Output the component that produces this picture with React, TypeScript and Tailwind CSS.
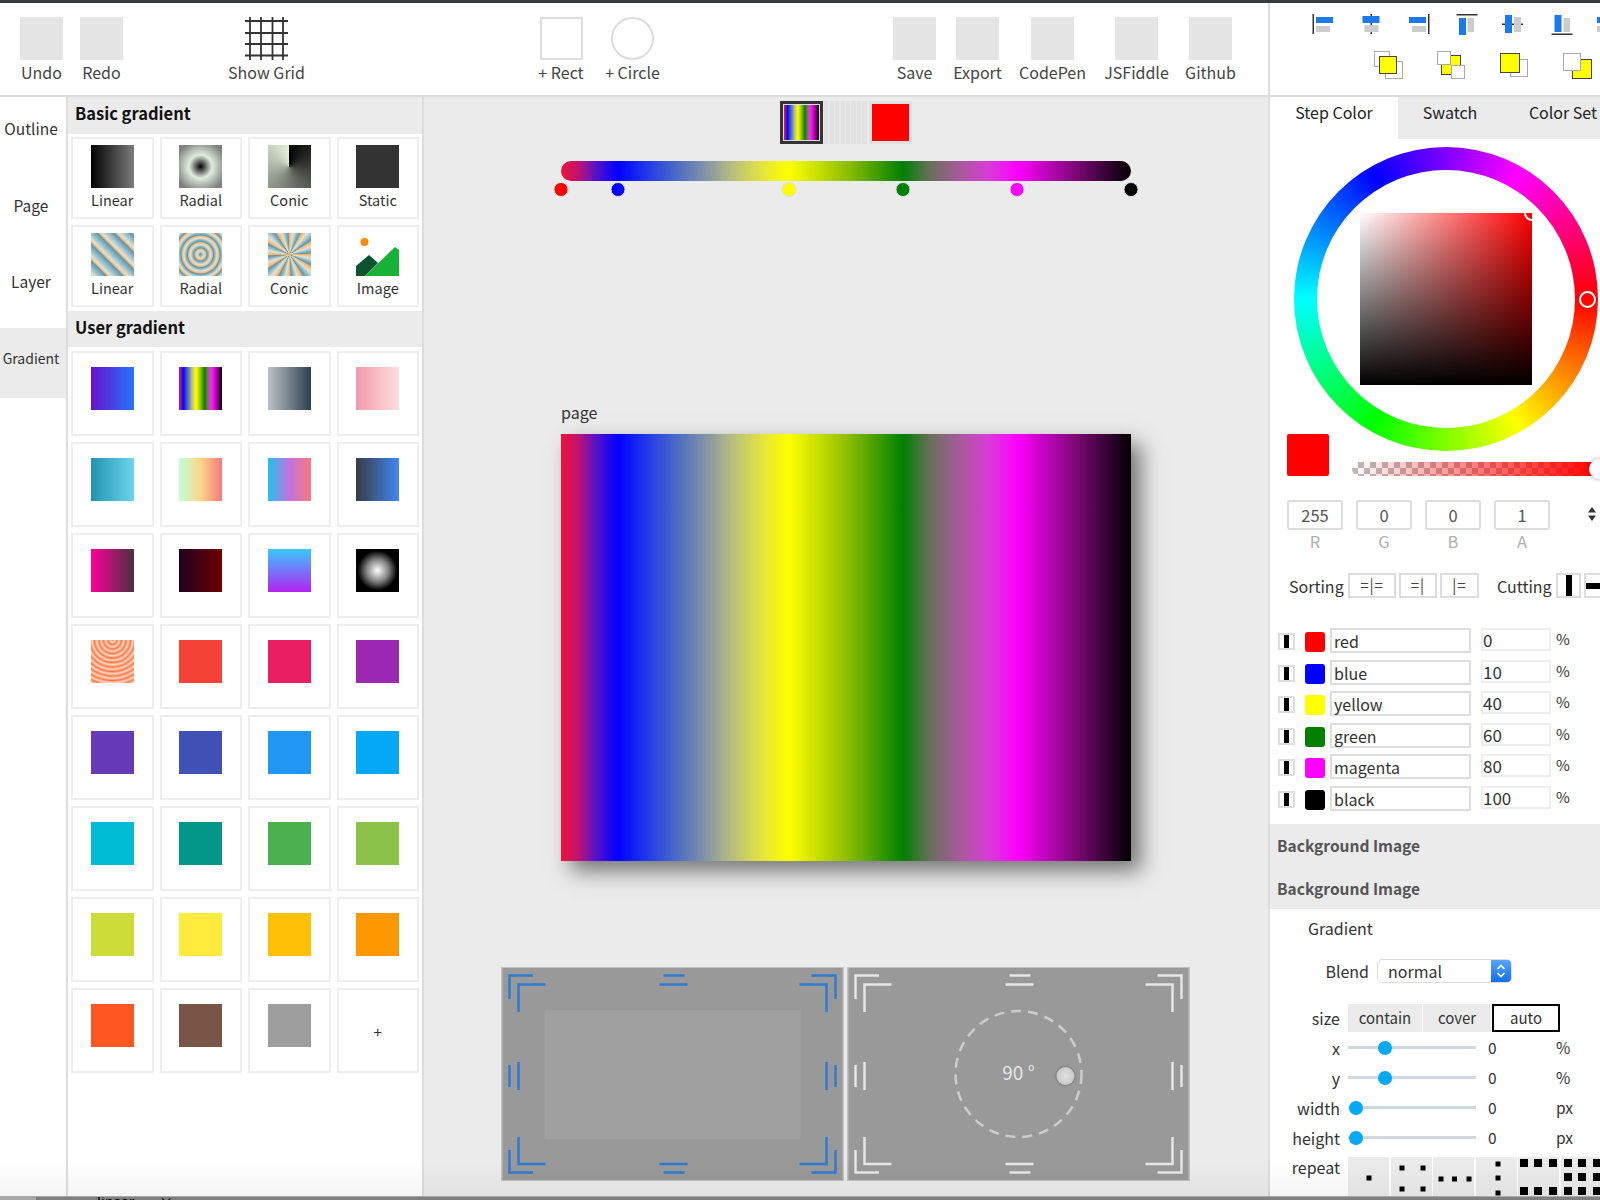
import React from "react";

const MULTI =
  "bg-[linear-gradient(to_right,#ee1236_0%,#c01270_3%,#5a12c8_6%,#0000ff_10%,#2038e8_15%,#4a68c8_20%,#8090a8_25%,#b8bd80_30%,#e2e240_35%,#ffff00_40%,#90c000_50%,#008000_60%,#6e6e60_65%,#a85a9a_70%,#d83cd8_75%,#ff00ff_80%,#80087a_90%,#000000_100%)]";

const Tool = ({ label, cls, children }: { label: string; cls: string; children?: React.ReactNode }) => (
  <div className={`flex flex-col items-center shrink-0 ${cls}`}>
    {children ?? <div className="w-[43px] h-[43px] bg-[#e5e5e5]" />}
    <div className="mt-[1px] text-[16px] leading-[22px] text-[#444] whitespace-nowrap">{label}</div>
  </div>
);

const GridIcon = () => (
  <svg width="43" height="43" viewBox="0 0 43 43" stroke="#333" strokeWidth="1.8">
    {[5, 16, 27.5, 38].map((v) => (
      <line key={"v" + v} x1={v} x2={v} y1="0" y2="43" />
    ))}
    {[4, 16, 27, 38.5].map((v) => (
      <line key={"h" + v} y1={v} y2={v} x1="0" x2="43" />
    ))}
  </svg>
);

const basic: { label: string; cls: string }[] = [
  { label: "Linear", cls: "bg-[linear-gradient(to_right,#000,#7c7c7c)]" },
  { label: "Radial", cls: "bg-[radial-gradient(circle,#000_0%,#dfeedd_38%,#808080_85%)]" },
  { label: "Conic", cls: "bg-[conic-gradient(#000,#e4f2dc)]" },
  { label: "Static", cls: "bg-[#333]" },
  { label: "Linear", cls: "bg-[repeating-linear-gradient(45deg,#f9b56b_0,#dfe3d7_2px,#5897b3_11px,#f9b56b_12px)]" },
  { label: "Radial", cls: "bg-[repeating-radial-gradient(circle,#5897b3_0,#dfe3d7_3.5px,#f9b56b_5.5px,#5897b3_6.5px)]" },
  { label: "Conic", cls: "bg-[repeating-conic-gradient(#f9b56b_0deg,#dfe3d7_10deg,#5897b3_26deg,#f9b56b_30deg)]" },
];

const user: string[] = [
  "bg-[linear-gradient(to_right,#6a11cb,#2575fc)]",
  MULTI,
  "bg-[linear-gradient(to_right,#bdc3c7,#2c3e50)]",
  "bg-[linear-gradient(to_right,#ee9ca7,#ffdde1)]",
  "bg-[linear-gradient(to_right,#2193b0,#6dd5ed)]",
  "bg-[linear-gradient(to_right,#c1ffd7,#fbd786,#f7797d)]",
  "bg-[linear-gradient(to_right,#22c1f0,#c471de,#f7797d)]",
  "bg-[linear-gradient(to_right,#373b44,#4286f4)]",
  "bg-[linear-gradient(to_right,#ff0099,#493240)]",
  "bg-[linear-gradient(to_right,#200122,#6f0000)]",
  "bg-[linear-gradient(to_bottom,#3bc8ff,#b224ef)]",
  "bg-[radial-gradient(circle,#fff_0%,#888_35%,#000_65%)]",
  "bg-[repeating-radial-gradient(circle_at_50%_0%,#ff7a45_0,#ffd8c6_2.2px,#ff7a45_4.5px)]",
  "bg-[#f44336]",
  "bg-[#e91e63]",
  "bg-[#9c27b0]",
  "bg-[#673ab7]",
  "bg-[#3f51b5]",
  "bg-[#2196f3]",
  "bg-[#03a9f4]",
  "bg-[#00bcd4]",
  "bg-[#009688]",
  "bg-[#4caf50]",
  "bg-[#8bc34a]",
  "bg-[#cddc39]",
  "bg-[#ffeb3b]",
  "bg-[#ffc107]",
  "bg-[#ff9800]",
  "bg-[#ff5722]",
  "bg-[#795548]",
  "bg-[#9e9e9e]",
];

const ImageIcon = () => (
  <svg width="43" height="43" viewBox="0 0 43 43">
    <circle cx="8.5" cy="9" r="4" fill="#ff8c00" />
    <path d="M0 33 L13 22 L22 30 L9 43 L0 43 Z" fill="#0d5231" />
    <path d="M9 43 L39 14 L43 17 L43 43 Z" fill="#17b136" />
  </svg>
);

const BasicCell = ({ label, children }: { label: string; children: React.ReactNode }) => (
  <div className="h-[82px] border-2 border-[#eeeeee] flex flex-col items-center pt-[6px]">
    {children}
    <div className="mt-[1px] text-[14.5px] leading-[22px] text-[#333]">{label}</div>
  </div>
);

const Align = ({ children }: { children: React.ReactNode }) => (
  <svg width="24" height="24" viewBox="0 0 24 24" className="shrink-0">
    {children}
  </svg>
);

const B = "#1b7ae8";
const G = "#cccccc";
const D = "#333333";

const Sq = ({ x, y, s, c, b }: { x: number; y: number; s: number; c: string; b: string }) => (
  <rect x={x + 0.5} y={y + 0.5} width={s - 1} height={s - 1} fill={c} stroke={b} strokeWidth="1" />
);

const Order = ({ children }: { children: React.ReactNode }) => (
  <svg width="30" height="30" viewBox="0 0 30 30" className="shrink-0">
    {children}
  </svg>
);

const HeaderPanel = () => (
  <div className="h-[92px] shrink-0 flex flex-col">
    <div className="flex pl-[42px] pt-[10px] gap-[23.5px]">
      <Align>
        <rect x="0.5" y="1" width="1.5" height="20" fill={D} />
        <rect x="4" y="4" width="17" height="6" fill={B} />
        <rect x="4" y="13" width="14" height="6" fill={G} />
      </Align>
      <Align>
        <rect x="10.5" y="1" width="1.5" height="20" fill={D} />
        <rect x="2.5" y="3" width="17" height="7" fill={B} />
        <rect x="4.5" y="12" width="14" height="7" fill={G} />
      </Align>
      <Align>
        <rect x="21" y="1" width="1.5" height="20" fill={D} />
        <rect x="2" y="4" width="17" height="6" fill={B} />
        <rect x="5" y="13" width="14" height="6" fill={G} />
      </Align>
      <Align>
        <rect x="1.5" y="1" width="21" height="1.5" fill={D} />
        <rect x="4" y="5" width="7" height="17" fill={B} />
        <rect x="12.5" y="5" width="6.5" height="14" fill={G} />
      </Align>
      <Align>
        <rect x="0" y="10.5" width="21" height="1.5" fill={D} />
        <rect x="3" y="2" width="7" height="18" fill={B} />
        <rect x="12" y="4" width="7" height="15" fill={G} />
      </Align>
      <Align>
        <rect x="1.5" y="20.5" width="21" height="1.5" fill={D} />
        <rect x="4.5" y="2" width="7" height="17" fill={B} />
        <rect x="13.5" y="5" width="6.5" height="14" fill={G} />
      </Align>
      <Align>
        <rect x="0" y="4" width="17" height="6" fill={B} />
        <rect x="0" y="13" width="14" height="6" fill={G} />
      </Align>
    </div>
    <div className="flex pl-[104px] pt-[14px] gap-[33px]">
      <Order>
        <Sq x={0} y={0} s={16} c="#fff" b="#aaa" />
        <Sq x={11} y={10} s={18} c="#fff" b="#aaa" />
        <Sq x={5} y={5} s={18} c="#ffff00" b="#444" />
      </Order>
      <Order>
        <Sq x={4} y={4} s={20} c="#ffff00" b="#444" />
        <Sq x={0} y={0} s={14} c="#fff" b="#aaa" />
        <Sq x={14} y={14} s={14} c="#fff" b="#aaa" />
      </Order>
      <Order>
        <Sq x={10} y={8} s={18} c="#fff" b="#aaa" />
        <Sq x={0} y={2} s={20} c="#ffff00" b="#444" />
      </Order>
      <Order>
        <Sq x={9} y={8} s={20} c="#ffff00" b="#444" />
        <Sq x={0} y={2} s={18} c="#fff" b="#aaa" />
      </Order>
    </div>
  </div>
);

const stops = [
  { cls: "left-[0%] bg-[#ff0000]" },
  { cls: "left-[10%] bg-[#0000ff]" },
  { cls: "left-[40%] bg-[#ffff00]" },
  { cls: "left-[60%] bg-[#008000]" },
  { cls: "left-[80%] bg-[#ff00ff]" },
  { cls: "left-[100%] bg-[#000000]" },
];

const Handles = ({ color }: { color: string }) => (
  <svg width="342" height="214" viewBox="0 0 342 214" fill="none" stroke={color} strokeWidth="2.5" className="absolute -left-[1px] -top-[1px]">
    <path d="M8 32 V8.5 H31.5 M17 45 V17.5 H44" />
    <path d="M334 32 V8.5 H310 M325 45 V17.5 H298" />
    <path d="M8 183 V205.5 H31.5 M17 170 V197 H44" />
    <path d="M334 183 V205.5 H310 M325 170 V197 H298" />
    <path d="M162 8.5 H183 M158 17.5 H186 M162 205.5 H183 M158 197 H186" />
    <path d="M8 98 V120 M17 95 V123 M334 98 V120 M325 95 V123" />
  </svg>
);

const rows = [
  { name: "red", v: "0", cls: "bg-[#ff0000]" },
  { name: "blue", v: "10", cls: "bg-[#0000ff]" },
  { name: "yellow", v: "40", cls: "bg-[#ffff00]" },
  { name: "green", v: "60", cls: "bg-[#008000]" },
  { name: "magenta", v: "80", cls: "bg-[#ff00ff]" },
  { name: "black", v: "100", cls: "bg-[#000000]" },
];

const sliders = [
  { label: "x", cls: "left-[37px]", unit: "%" },
  { label: "y", cls: "left-[37px]", unit: "%" },
  { label: "width", cls: "left-[8px]", unit: "px" },
  { label: "height", cls: "left-[8px]", unit: "px" },
];

const Dots = ({ pts, s = 5 }: { pts: [number, number][]; s?: number }) => (
  <svg width="41" height="42" viewBox="0 0 41 42" className="shrink-0 bg-[#ebebeb]">
    {pts.map(([x, y], i) => (
      <rect key={i} x={x - s / 2} y={y - s / 2} width={s} height={s} fill="#000" />
    ))}
  </svg>
);

export default function App() {
  return (
    <div className="relative w-[1600px] h-[1200px] overflow-hidden bg-white font-['Noto_Sans_CJK_KR','Noto_Sans',sans-serif] flex flex-col">
      <div className="h-[3px] shrink-0 bg-[#373b3f]" />
      <div className="flex h-[1193px] shrink-0">
        {/* Left + centre */}
        <div className="w-[1268px] shrink-0 flex flex-col">
          <div className="h-[92px] shrink-0 flex pt-[14px]">
            <Tool label="Undo" cls="ml-[12px] w-[59px]" />
            <Tool label="Redo" cls="w-[61px]" />
            <Tool label="Show Grid" cls="ml-[89.5px] w-[90px]">
              <GridIcon />
            </Tool>
            <Tool label="+ Rect" cls="ml-[219.5px] w-[60px]">
              <div className="w-[43px] h-[43px] border-2 border-[#dddddd] bg-white" />
            </Tool>
            <Tool label="+ Circle" cls="w-[83px]">
              <div className="w-[43px] h-[43px] rounded-full border-2 border-[#dddddd] bg-white" />
            </Tool>
            <Tool label="Save" cls="ml-[215.5px] w-[50px]" />
            <Tool label="Export" cls="ml-[8px] w-[60px]" />
            <Tool label="CodePen" cls="ml-[7px] w-[76px]" />
            <Tool label="JSFiddle" cls="ml-[8px] w-[76px]" />
            <Tool label="Github" cls="ml-[6px] w-[60px]" />
          </div>
          <div className="h-[2px] shrink-0 bg-[#dddddd]" />
          <div className="flex flex-1 min-h-0">
            {/* Sidebar */}
            <div className="w-[68px] shrink-0 border-r-2 border-[#dddddd] flex flex-col pt-[1px] gap-[6.7px]">
              {["Outline", "Page", "Layer"].map((t) => (
                <div key={t} className="h-[70px] pt-[19px] pr-[4px] text-center text-[15.5px] leading-[22px] text-[#333]">
                  {t}
                </div>
              ))}
              <div className="h-[70px] pt-[19px] pr-[4px] text-center text-[14px] leading-[22px] text-[#333] bg-[#ebebeb]">Gradient</div>
            </div>
            {/* Gradient list */}
            <div className="w-[356px] shrink-0 border-r-2 border-[#dddddd] flex flex-col">
              <div className="h-[37px] shrink-0 bg-[#ebebeb] pl-[7px] text-[16.5px] leading-[32px] font-bold text-[#111]">Basic gradient</div>
              <div className="grid grid-cols-4 gap-x-[6px] gap-y-[6px] px-[3px] pt-[3px]">
                {basic.map((b, i) => (
                  <BasicCell key={i} label={b.label}>
                    <div className={`w-[43px] h-[43px] ${b.cls}`} />
                  </BasicCell>
                ))}
                <BasicCell label="Image">
                  <ImageIcon />
                </BasicCell>
              </div>
              <div className="mt-[4px] h-[36px] shrink-0 bg-[#ebebeb] pl-[7px] text-[16.5px] leading-[32px] font-bold text-[#111]">User gradient</div>
              <div className="grid grid-cols-4 gap-x-[6px] gap-y-[6px] px-[3px] pt-[4px]">
                {user.map((c, i) => (
                  <div key={i} className="h-[85px] border-2 border-[#eeeeee] flex justify-center pt-[14px]">
                    <div className={`w-[43px] h-[43px] ${c}`} />
                  </div>
                ))}
                <div className="h-[85px] border-2 border-[#eeeeee] flex items-center justify-center pt-[4px] text-[15px] text-[#333]">+</div>
              </div>
            </div>
            {/* Canvas */}
            <div className="flex-1 min-w-0 bg-[#ebebeb] flex flex-col items-center">
              <div className="flex mt-[4px] gap-[1px]">
                <div className="w-[43px] h-[43px] border-[3px] border-[#333] p-[1px] bg-[#dddddd]">
                  <div className={`w-full h-full ${MULTI}`} />
                </div>
                <div className="w-[43px] h-[43px] bg-[repeating-linear-gradient(to_right,#e1e1e1_0,#e1e1e1_4px,#e8e8e8_4px,#e8e8e8_5.5px)]" />
                <div className="ml-[1px] w-[43px] h-[43px] p-[3px] bg-[#e0e0e0]">
                  <div className="w-full h-full bg-[#ff0000]" />
                </div>
              </div>
              <div className={`relative mt-[17px] w-[570px] h-[20px] rounded-[10px] ${MULTI}`}>
                {stops.map((s, i) => (
                  <div key={i} className={`absolute top-[21px] w-[15px] h-[15px] -translate-x-1/2 rounded-full border border-[#dddddd] ${s.cls}`} />
                ))}
              </div>
              <div className="mt-[220px] w-[570px] text-[16px] leading-[22px] text-[#333]">page</div>
              <div className={`mt-[11px] w-[570px] h-[427px] ${MULTI} shadow-[10px_10px_20px_0_rgba(0,0,0,0.5)]`} />
              <div className="mt-[106px] flex gap-[4px] -translate-x-[0.5px]">
                <div className="relative w-[342px] h-[214px] bg-[#999999] border border-[#c0c0c0] flex items-center justify-center">
                  <div className="w-[256px] h-[129px] bg-[#a0a0a0]" />
                  <Handles color="#2e7bcf" />
                </div>
                <div className="relative w-[342px] h-[214px] bg-[#999999] border border-[#c0c0c0] flex items-center justify-center">
                  <Handles color="#e6e6e6" />
                  <svg width="130" height="130" viewBox="0 0 130 130" className="absolute left-[105px] top-[41px]" fill="none">
                    <circle cx="65" cy="65" r="63" stroke="#cccccc" strokeWidth="2.5" strokeDasharray="10 7" />
                  </svg>
                  <div className="text-[19px] text-[#e6e6e6] leading-[24px] -mt-[4px]">90 °</div>
                  <div className="absolute left-[208px] top-[99px] w-[18px] h-[18px] rounded-full bg-[radial-gradient(circle,#e2e2e2,#bdbdbd)] shadow-[0_0_3px_rgba(0,0,0,0.4)]" />
                </div>
              </div>
            </div>
          </div>
        </div>
        {/* Right */}
        <div className="w-[332px] shrink-0 border-l-2 border-[#dddddd] flex flex-col overflow-hidden">
          <HeaderPanel />
          <div className="h-[2px] shrink-0 bg-[#dddddd]" />
          <div className="flex h-[42px] shrink-0 text-[16px] leading-[30px] text-[#222] text-center">
            <div className="w-[128px] shrink-0 bg-white">Step Color</div>
            <div className="w-[104px] shrink-0 bg-[#ebebeb]">Swatch</div>
            <div className="w-[122px] shrink-0 bg-[#ebebeb]">Color Set</div>
          </div>
          <div className="ml-[24px] mt-[8px] w-[304px] h-[304px] shrink-0 relative rounded-full bg-[conic-gradient(from_90deg,#f00,#ff0,#0f0,#0ff,#00f,#f0f,#f00)] flex items-center justify-center">
            <div className="w-[258px] h-[258px] rounded-full bg-white flex items-center justify-center">
              <div className="relative w-[172px] h-[172px] overflow-hidden bg-[linear-gradient(to_top,#000,transparent),linear-gradient(to_right,#fff,#f00)]">
                <div className="absolute -right-[8px] -top-[8px] w-[16px] h-[16px] rounded-full border-2 border-white" />
              </div>
            </div>
            <div className="absolute left-[285px] top-[144px] w-[17px] h-[17px] rounded-full border-2 border-white" />
          </div>
          <div className="ml-[17px] -mt-[17px] flex items-end shrink-0">
            <div className="w-[42px] h-[42px] rounded-[2px] bg-[#ff0000] shrink-0" />
            <div className="relative ml-[23px] w-[248px] h-[14px] rounded-[7px] bg-[repeating-conic-gradient(#bbbbbb_0_25%,#ffffff_0_50%)] bg-[length:12px_12px] shrink-0">
              <div className="h-full rounded-[7px] bg-[linear-gradient(to_right,transparent,#f00)]" />
              <div className="absolute -right-[9px] -top-[3px] w-[20px] h-[20px] rounded-full bg-white shadow-[0_0_4px_rgba(0,0,0,0.35)]" />
            </div>
          </div>
          <div className="ml-[17px] mt-[24px] flex items-start shrink-0">
            {["255", "0", "0", "1"].map((v, i) => (
              <div key={i} className="w-[56px] mr-[13px] shrink-0 flex flex-col items-center">
                <div className="w-full h-[30px] rounded-[3px] border-2 border-[#dddddd] text-center text-[16.5px] leading-[26px] text-[#555]">{v}</div>
                <div className="text-[16.5px] leading-[22px] text-[#b0b0b0]">{"RGBA"[i]}</div>
              </div>
            ))}
            <svg width="10" height="16" viewBox="0 0 10 16" className="ml-[24px] mt-[6px] shrink-0" fill="#333">
              <path d="M5 1 L9 6.5 H1 Z M5 15 L1 9.5 H9 Z" />
            </svg>
          </div>
          <div className="ml-[19px] mt-[21px] flex items-center h-[25px] shrink-0 text-[16px] text-[#333]">
            <div className="w-[53px] shrink-0 whitespace-nowrap">Sorting</div>
            {[
              ["=|=", "ml-[6px] w-[48px]"],
              ["=|", "ml-[3px] w-[38px]"],
              ["|=", "ml-[3px] w-[39px]"],
            ].map(([t, c]) => (
              <div key={t} className={`h-[25px] border-2 border-[#dddddd] text-center text-[15px] leading-[20px] tracking-[1px] text-[#444] shrink-0 ${c}`}>
                {t}
              </div>
            ))}
            <div className="ml-[18px] w-[53px] shrink-0 whitespace-nowrap">Cutting</div>
            <div className="ml-[6px] w-[25px] h-[25px] border-2 border-[#dddddd] flex justify-center shrink-0">
              <div className="w-[6px] h-full bg-black" />
            </div>
            <div className="ml-[3px] w-[25px] h-[25px] border-2 border-[#dddddd] flex flex-col justify-center shrink-0">
              <div className="w-full h-[6px] bg-black" />
            </div>
          </div>
          <div className="mt-[30px] pl-[8px] flex flex-col gap-[6.5px] shrink-0">
            {rows.map((r) => (
              <div key={r.name} className="flex items-start h-[25px]">
                <div className="mt-[5px] w-[17px] h-[17px] border-2 border-[#dddddd] flex justify-center shrink-0">
                  <div className="w-[5px] h-full bg-black" />
                </div>
                <div className={`ml-[10px] mt-[4px] w-[20px] h-[20px] rounded-[3px] shrink-0 ${r.cls}`} />
                <div className="ml-[5px] w-[141px] h-[25px] border-2 border-[#dddddd] pl-[2px] text-[16px] leading-[22px] text-[#333] shrink-0">{r.name}</div>
                <div className="ml-[10px] w-[70px] h-[23px] border-2 border-[#eeeeee] text-[17px] leading-[19px] text-[#333] shrink-0">{r.v}</div>
                <div className="ml-[5px] text-[15px] leading-[22px] text-[#333]">%</div>
              </div>
            ))}
          </div>
          <div className="mt-[13px] h-[85px] shrink-0 bg-[#ebebeb] pl-[7px] text-[15.5px] font-bold text-[#555] leading-[42px]">
            <div className="h-[43px]">Background Image</div>
            <div className="h-[42px]">Background Image</div>
          </div>
          <div className="ml-[38px] mt-[8px] text-[16px] leading-[22px] text-[#333] shrink-0">Gradient</div>
          <div className="mt-[20px] flex items-center h-[24px] shrink-0">
            <div className="w-[99px] shrink-0 text-right text-[16px] text-[#333]">Blend</div>
            <div className="ml-[8px] w-[135px] h-[24px] rounded-[5px] border border-[#dddddd] flex overflow-hidden shrink-0">
              <div className="flex-1 pl-[10px] text-[16px] leading-[22px] text-[#333]">normal</div>
              <div className="w-[20px] bg-[linear-gradient(to_bottom,#5aa5fb,#0f6fee)] flex items-center justify-center">
                <svg width="12" height="16" viewBox="0 0 12 16" fill="none" stroke="#fff" strokeWidth="1.6">
                  <path d="M2.5 6 L6 2.5 L9.5 6 M2.5 10 L6 13.5 L9.5 10" />
                </svg>
              </div>
            </div>
          </div>
          <div className="mt-[21px] flex items-center h-[28px] shrink-0">
            <div className="w-[70px] shrink-0 text-right text-[16px] text-[#333]">size</div>
            <div className="ml-[8px] w-[74px] h-[28px] bg-[#ebebeb] text-center text-[15px] leading-[28px] text-[#333] shrink-0">contain</div>
            <div className="ml-[1px] w-[68px] h-[28px] bg-[#ebebeb] text-center text-[15px] leading-[28px] text-[#333] shrink-0">cover</div>
            <div className="ml-[1px] w-[68px] h-[28px] border-2 border-black text-center text-[15px] leading-[24px] text-[#333] shrink-0">auto</div>
          </div>
          <div className="flex flex-col shrink-0 mt-[1px]">
            {sliders.map((s) => (
              <div key={s.label} className="flex items-center h-[30px] shrink-0">
                <div className="w-[70px] shrink-0 text-right text-[16px] text-[#333]">{s.label}</div>
                <div className="ml-[8px] relative w-[128px] h-[3px] bg-[#cfd8dc] shrink-0">
                  <div className={`absolute -top-[5.5px] -ml-[7px] w-[14px] h-[14px] rounded-full bg-[#03a9f4] ${s.cls}`} />
                </div>
                <div className="ml-[12px] w-[20px] shrink-0 text-[15.5px] text-[#333]">0</div>
                <div className="ml-[48px] text-[15.5px] text-[#333]">{s.unit}</div>
              </div>
            ))}
          </div>
          <div className="flex items-start shrink-0 mt-[4px]">
            <div className="w-[70px] shrink-0 text-right text-[16px] leading-[26px] -mt-[3px] text-[#333]">repeat</div>
            <div className="ml-[8px] flex gap-[1.5px]">
              <Dots pts={[[21, 21]]} />
              <Dots pts={[[11, 11], [32, 11], [11, 32], [32, 32]]} />
              <Dots pts={[[8, 22], [21.5, 22], [36, 22]]} />
              <Dots pts={[[22, 7], [22, 21], [22, 36]]} />
              <Dots s={8} pts={[[6, 6], [20, 6], [35, 6], [6, 34], [20, 34], [35, 34]]} />
              <Dots s={8} pts={[[7, 6], [21, 6], [36, 6], [7, 20], [21, 20], [36, 20], [7, 34], [21, 34], [36, 34]]} />
            </div>
          </div>
        </div>
      </div>
      <div className="h-[4px] shrink-0 bg-[#7f7f7f] border-t border-[#aaaaaa] overflow-hidden flex text-[14px] leading-[14px] text-black">
        <div className="w-[36px] h-full bg-[#a8a8a8] shrink-0" />
        <div className="ml-[61px] -mt-[3px]">linear</div>
        <div className="ml-[25px] -mt-[3px]">×</div>
      </div>
      <div className="absolute left-0 right-0 top-[1160px] h-[36px] pointer-events-none bg-[linear-gradient(to_bottom,transparent,rgba(0,0,0,0.04))]" />
    </div>
  );
}
